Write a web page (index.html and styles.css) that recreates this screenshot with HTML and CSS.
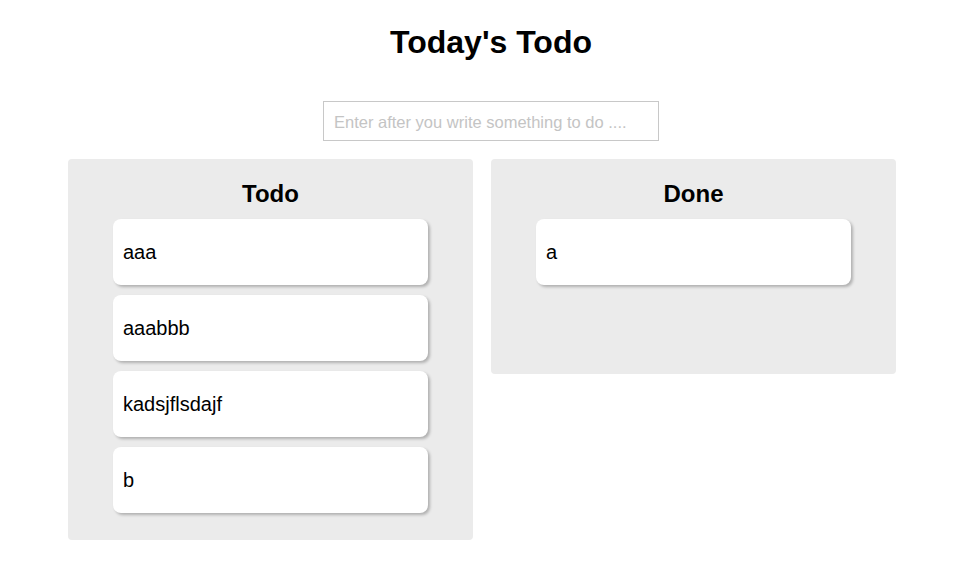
FILE: index.html
```html
<!DOCTYPE html>
<html lang="en">
<head>
<meta charset="utf-8">
<title>Today's Todo</title>
<link rel="stylesheet" href="styles.css">
</head>
<body>
<div class="app">
  <header class="header">
    <h1 class="title">Today's Todo</h1>
    <input class="todo-input" type="text" placeholder="Enter after you write something to do ....">
  </header>
  <main class="boards">
    <section class="board board-todo">
      <h2 class="board-title">Todo</h2>
      <div class="card">aaa</div>
      <div class="card">aaabbb</div>
      <div class="card">kadsjflsdajf</div>
      <div class="card">b</div>
    </section>
    <section class="board board-done">
      <h2 class="board-title">Done</h2>
      <div class="card">a</div>
    </section>
  </main>
</div>
</body>
</html>
```

FILE: styles.css
```css
* {
  box-sizing: border-box;
}

body {
  margin: 0;
  background: #ffffff;
  color: #000000;
  font-family: "Liberation Sans", Arial, Helvetica, sans-serif;
}

.app {
  width: 960px;
}

.header {
  margin-left: 22px;
  display: flex;
  flex-direction: column;
  align-items: center;
}

.title {
  margin: 24px 0 0;
  font-size: 32px;
  font-weight: bold;
  line-height: 37px;
}

.todo-input {
  margin-top: 40px;
  width: 336px;
  height: 40px;
  padding: 3px 10px 0;
  border: 1px solid #c8c8c8;
  border-radius: 0;
  outline: none;
  font-family: "Liberation Sans", Arial, Helvetica, sans-serif;
  font-size: 16.5px;
  color: #000;
}

.todo-input::placeholder {
  color: #c4c4c4;
}

.boards {
  display: flex;
  align-items: flex-start;
  gap: 18px;
  margin-top: 18px;
  padding-left: 68px;
}

.board {
  width: 405px;
  background: #ebebeb;
  border-radius: 4px;
  padding: 21px 0 17px;
  display: flex;
  flex-direction: column;
  align-items: center;
}

.board-done {
  min-height: 215px;
}

.board-title {
  margin: 0 0 12px;
  font-size: 24px;
  font-weight: bold;
  line-height: 27px;
}

.card {
  width: 315px;
  height: 66px;
  margin-bottom: 10px;
  padding: 0 10px;
  display: flex;
  align-items: center;
  background: #ffffff;
  border-radius: 8px;
  box-shadow: 2px 2px 3px rgba(0, 0, 0, 0.25);
  font-size: 20px;
}
```
